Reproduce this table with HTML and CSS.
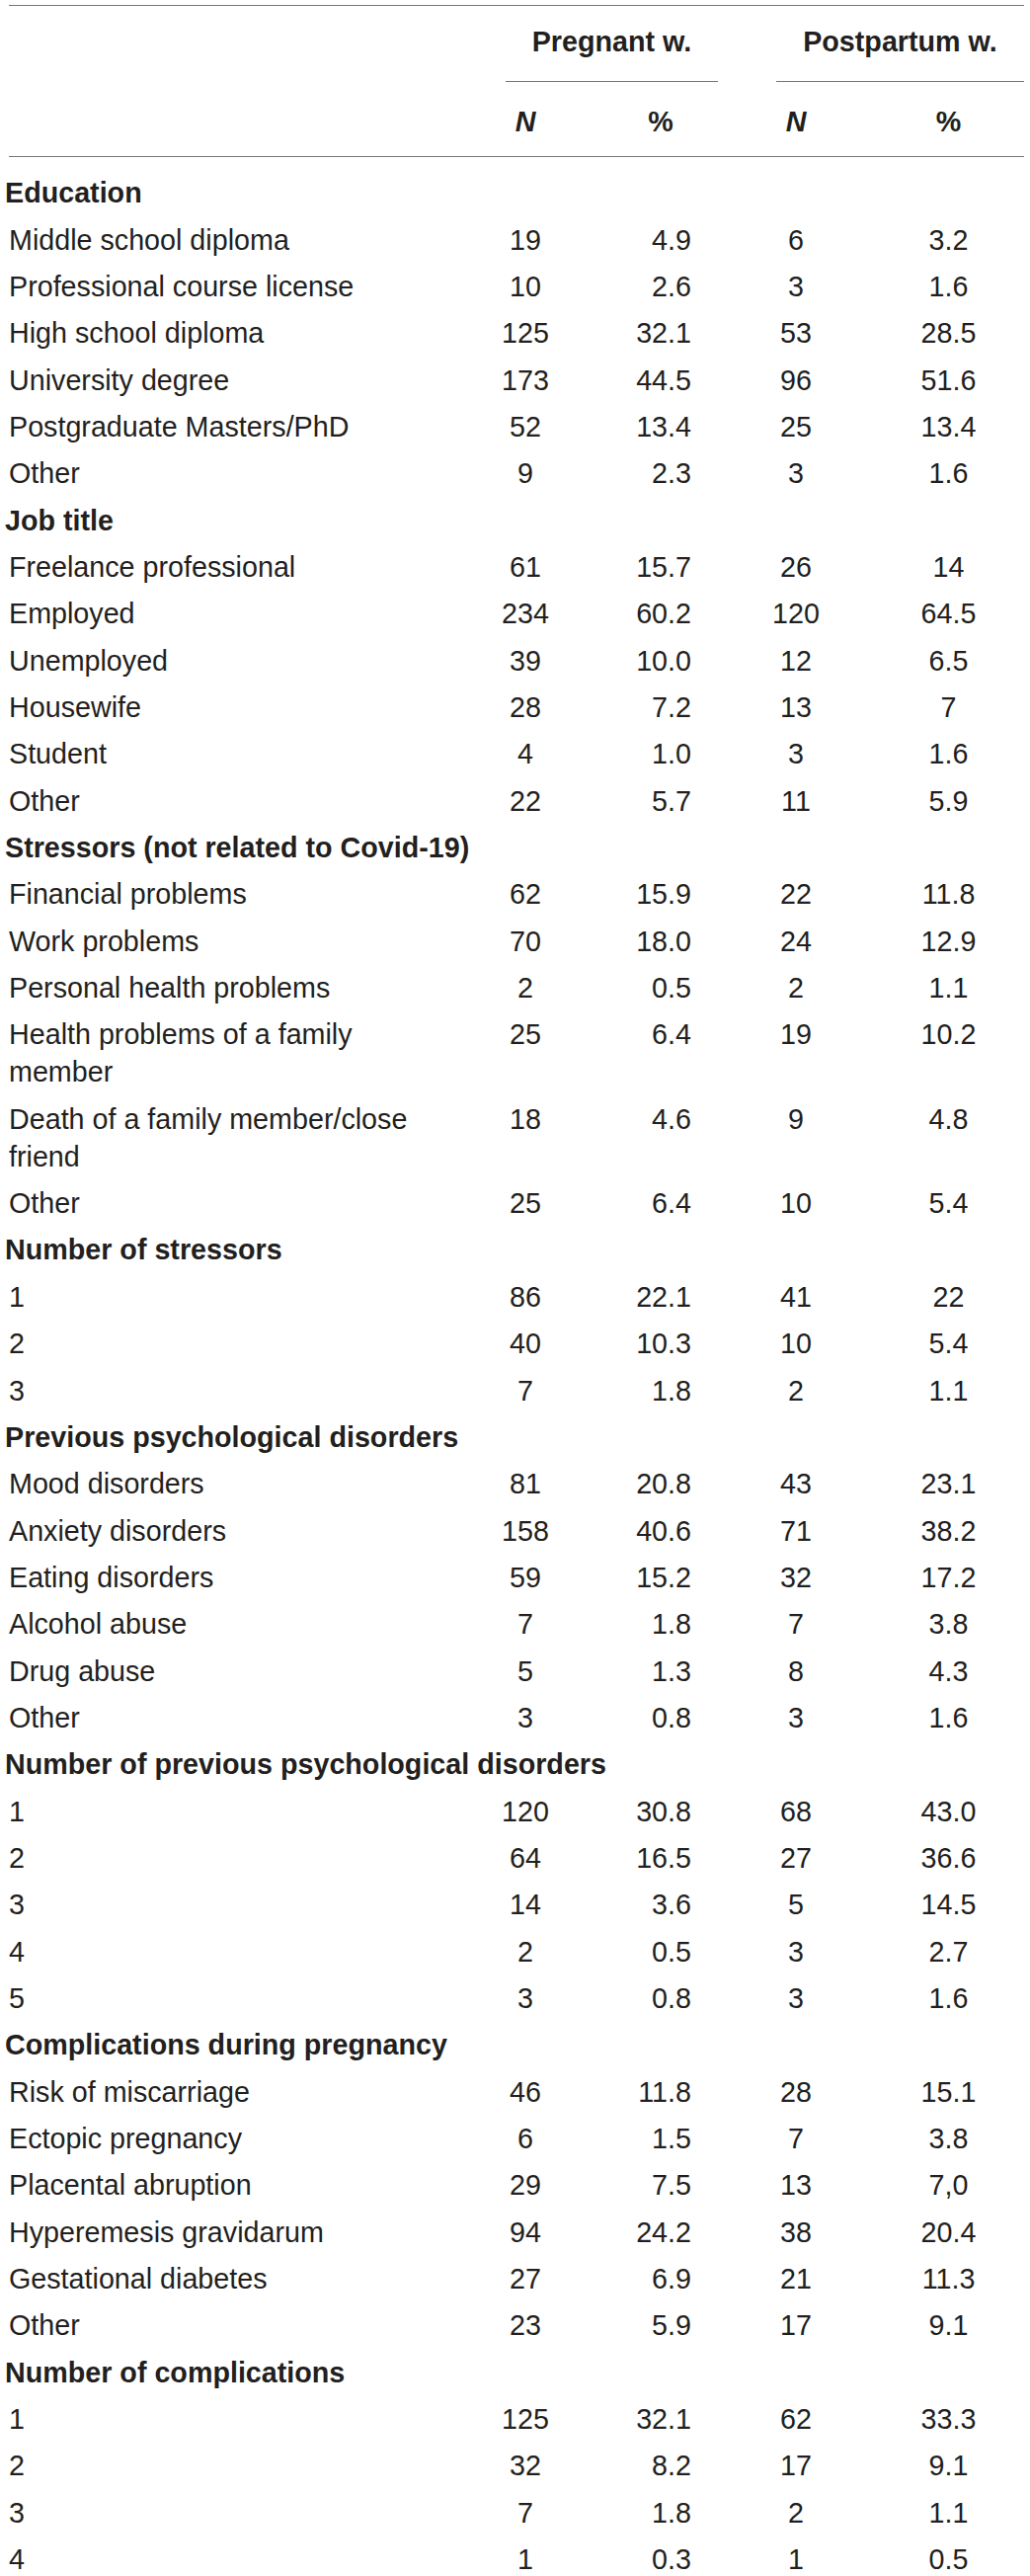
FILE: index.html
```html
<!DOCTYPE html>
<html lang="en">
<head>
<meta charset="utf-8">
<title>Table</title>
<link rel="stylesheet" href="styles.css">
</head>
<body>
<div class="table">
  <div class="row head1">
    <div class="grp g1">Pregnant w.</div>
    <div class="grp g2">Postpartum w.</div>
  </div>
  <div class="row head2">
    <div class="n n1"><b><i>N</i></b></div>
    <div class="ph1"><b>%</b></div>
    <div class="n n2"><b><i>N</i></b></div>
    <div class="p2"><b>%</b></div>
  </div>
  <div class="tbody">
    <div class="row"><div class="sec">Education</div></div>
    <div class="row"><div class="lab">Middle school diploma</div><div class="n n1">19</div><div class="p1">4.9</div><div class="n n2">6</div><div class="p2">3.2</div></div>
    <div class="row"><div class="lab">Professional course license</div><div class="n n1">10</div><div class="p1">2.6</div><div class="n n2">3</div><div class="p2">1.6</div></div>
    <div class="row"><div class="lab">High school diploma</div><div class="n n1">125</div><div class="p1">32.1</div><div class="n n2">53</div><div class="p2">28.5</div></div>
    <div class="row"><div class="lab">University degree</div><div class="n n1">173</div><div class="p1">44.5</div><div class="n n2">96</div><div class="p2">51.6</div></div>
    <div class="row"><div class="lab">Postgraduate Masters/PhD</div><div class="n n1">52</div><div class="p1">13.4</div><div class="n n2">25</div><div class="p2">13.4</div></div>
    <div class="row"><div class="lab">Other</div><div class="n n1">9</div><div class="p1">2.3</div><div class="n n2">3</div><div class="p2">1.6</div></div>

    <div class="row"><div class="sec">Job title</div></div>
    <div class="row"><div class="lab">Freelance professional</div><div class="n n1">61</div><div class="p1">15.7</div><div class="n n2">26</div><div class="p2">14</div></div>
    <div class="row"><div class="lab">Employed</div><div class="n n1">234</div><div class="p1">60.2</div><div class="n n2">120</div><div class="p2">64.5</div></div>
    <div class="row"><div class="lab">Unemployed</div><div class="n n1">39</div><div class="p1">10.0</div><div class="n n2">12</div><div class="p2">6.5</div></div>
    <div class="row"><div class="lab">Housewife</div><div class="n n1">28</div><div class="p1">7.2</div><div class="n n2">13</div><div class="p2">7</div></div>
    <div class="row"><div class="lab">Student</div><div class="n n1">4</div><div class="p1">1.0</div><div class="n n2">3</div><div class="p2">1.6</div></div>
    <div class="row"><div class="lab">Other</div><div class="n n1">22</div><div class="p1">5.7</div><div class="n n2">11</div><div class="p2">5.9</div></div>

    <div class="row"><div class="sec">Stressors (not related to Covid-19)</div></div>
    <div class="row"><div class="lab">Financial problems</div><div class="n n1">62</div><div class="p1">15.9</div><div class="n n2">22</div><div class="p2">11.8</div></div>
    <div class="row"><div class="lab">Work problems</div><div class="n n1">70</div><div class="p1">18.0</div><div class="n n2">24</div><div class="p2">12.9</div></div>
    <div class="row"><div class="lab">Personal health problems</div><div class="n n1">2</div><div class="p1">0.5</div><div class="n n2">2</div><div class="p2">1.1</div></div>
    <div class="row"><div class="lab">Health problems of a family member</div><div class="n n1">25</div><div class="p1">6.4</div><div class="n n2">19</div><div class="p2">10.2</div></div>
    <div class="row"><div class="lab">Death of a family member/close friend</div><div class="n n1">18</div><div class="p1">4.6</div><div class="n n2">9</div><div class="p2">4.8</div></div>
    <div class="row"><div class="lab">Other</div><div class="n n1">25</div><div class="p1">6.4</div><div class="n n2">10</div><div class="p2">5.4</div></div>

    <div class="row"><div class="sec">Number of stressors</div></div>
    <div class="row"><div class="lab">1</div><div class="n n1">86</div><div class="p1">22.1</div><div class="n n2">41</div><div class="p2">22</div></div>
    <div class="row"><div class="lab">2</div><div class="n n1">40</div><div class="p1">10.3</div><div class="n n2">10</div><div class="p2">5.4</div></div>
    <div class="row"><div class="lab">3</div><div class="n n1">7</div><div class="p1">1.8</div><div class="n n2">2</div><div class="p2">1.1</div></div>

    <div class="row"><div class="sec">Previous psychological disorders</div></div>
    <div class="row"><div class="lab">Mood disorders</div><div class="n n1">81</div><div class="p1">20.8</div><div class="n n2">43</div><div class="p2">23.1</div></div>
    <div class="row"><div class="lab">Anxiety disorders</div><div class="n n1">158</div><div class="p1">40.6</div><div class="n n2">71</div><div class="p2">38.2</div></div>
    <div class="row"><div class="lab">Eating disorders</div><div class="n n1">59</div><div class="p1">15.2</div><div class="n n2">32</div><div class="p2">17.2</div></div>
    <div class="row"><div class="lab">Alcohol abuse</div><div class="n n1">7</div><div class="p1">1.8</div><div class="n n2">7</div><div class="p2">3.8</div></div>
    <div class="row"><div class="lab">Drug abuse</div><div class="n n1">5</div><div class="p1">1.3</div><div class="n n2">8</div><div class="p2">4.3</div></div>
    <div class="row"><div class="lab">Other</div><div class="n n1">3</div><div class="p1">0.8</div><div class="n n2">3</div><div class="p2">1.6</div></div>

    <div class="row"><div class="sec">Number of previous psychological disorders</div></div>
    <div class="row"><div class="lab">1</div><div class="n n1">120</div><div class="p1">30.8</div><div class="n n2">68</div><div class="p2">43.0</div></div>
    <div class="row"><div class="lab">2</div><div class="n n1">64</div><div class="p1">16.5</div><div class="n n2">27</div><div class="p2">36.6</div></div>
    <div class="row"><div class="lab">3</div><div class="n n1">14</div><div class="p1">3.6</div><div class="n n2">5</div><div class="p2">14.5</div></div>
    <div class="row"><div class="lab">4</div><div class="n n1">2</div><div class="p1">0.5</div><div class="n n2">3</div><div class="p2">2.7</div></div>
    <div class="row"><div class="lab">5</div><div class="n n1">3</div><div class="p1">0.8</div><div class="n n2">3</div><div class="p2">1.6</div></div>

    <div class="row"><div class="sec">Complications during pregnancy</div></div>
    <div class="row"><div class="lab">Risk of miscarriage</div><div class="n n1">46</div><div class="p1">11.8</div><div class="n n2">28</div><div class="p2">15.1</div></div>
    <div class="row"><div class="lab">Ectopic pregnancy</div><div class="n n1">6</div><div class="p1">1.5</div><div class="n n2">7</div><div class="p2">3.8</div></div>
    <div class="row"><div class="lab">Placental abruption</div><div class="n n1">29</div><div class="p1">7.5</div><div class="n n2">13</div><div class="p2">7,0</div></div>
    <div class="row"><div class="lab">Hyperemesis gravidarum</div><div class="n n1">94</div><div class="p1">24.2</div><div class="n n2">38</div><div class="p2">20.4</div></div>
    <div class="row"><div class="lab">Gestational diabetes</div><div class="n n1">27</div><div class="p1">6.9</div><div class="n n2">21</div><div class="p2">11.3</div></div>
    <div class="row"><div class="lab">Other</div><div class="n n1">23</div><div class="p1">5.9</div><div class="n n2">17</div><div class="p2">9.1</div></div>

    <div class="row"><div class="sec">Number of complications</div></div>
    <div class="row"><div class="lab">1</div><div class="n n1">125</div><div class="p1">32.1</div><div class="n n2">62</div><div class="p2">33.3</div></div>
    <div class="row"><div class="lab">2</div><div class="n n1">32</div><div class="p1">8.2</div><div class="n n2">17</div><div class="p2">9.1</div></div>
    <div class="row"><div class="lab">3</div><div class="n n1">7</div><div class="p1">1.8</div><div class="n n2">2</div><div class="p2">1.1</div></div>
    <div class="row"><div class="lab">4</div><div class="n n1">1</div><div class="p1">0.3</div><div class="n n2">1</div><div class="p2">0.5</div></div>
  </div>
</div>
</body>
</html>
```

FILE: styles.css
```css
html, body {
  margin: 0;
  padding: 0;
  background: #ffffff;
}

body {
  color: #231f20;
  font-family: "Liberation Sans", Arial, Helvetica, sans-serif;
  font-size: 28.7px;
  line-height: 38px;
}

.table {
  margin: 5px 6px 0 9px;
  border-top: 1px solid #777777;
}

.row {
  display: grid;
  grid-template-columns: 483px 80px 155px 39px 80px 191px;
}

.tbody {
  padding-top: 12.6px;
}

.tbody .row {
  padding: 4.68px 0;
}

/* header */
.head1 .grp {
  margin-left: 20px;
  padding: 17px 0 21px;
  border-bottom: 1px solid #777777;
  text-align: center;
  font-weight: bold;
}

.g1 {
  grid-column: 2 / 4;
}

.g2 {
  grid-column: 5 / 7;
}

.head2 {
  padding: 21px 0 16px;
  border-bottom: 1px solid #777777;
}

.ph1 {
  grid-column: 3;
  text-align: center;
  padding-left: 39px;
}

/* cells */
.sec {
  grid-column: 1 / -1;
  font-weight: bold;
  margin-left: -4px;
}

.lab {
  grid-column: 1;
  padding-right: 53px;
}

.n {
  text-align: center;
}

.n1 {
  grid-column: 2;
}

.p1 {
  grid-column: 3;
  text-align: right;
  padding-right: 27px;
}

.n2 {
  grid-column: 5;
}

.p2 {
  grid-column: 6;
  text-align: center;
  padding-left: 38px;
}
```
